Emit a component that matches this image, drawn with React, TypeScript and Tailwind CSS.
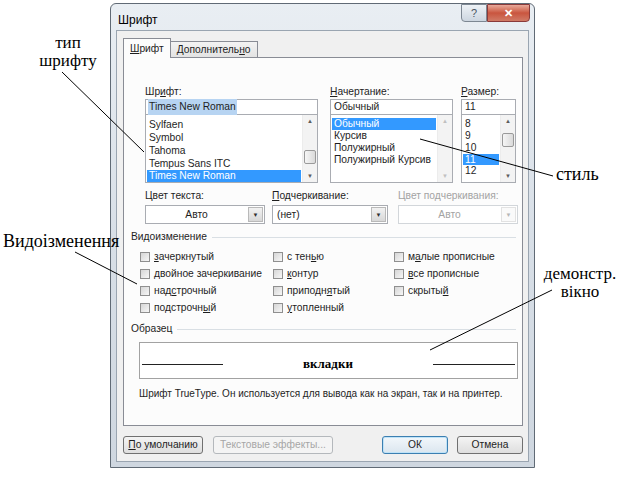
import React from "react";

const U = ({ c }: { c: string }) => <span className="underline underline-offset-[1px]">{c}</span>;

function ScrollBar({ thumb, dim }: { thumb?: string; dim?: boolean }) {
  const arrow = dim ? "text-[#c0c0c0]" : "text-[#5c5c5c]";
  return (
    <div className="relative w-[15px] h-full bg-[#f3f3f3] border-l border-[#ececec] flex flex-col items-center justify-between py-[2px]">
      <span className={`text-[6px] leading-[8px] ${arrow}`}>▲</span>
      <span className={`text-[6px] leading-[8px] ${arrow}`}>▼</span>
      {thumb && (
        <div className={`absolute left-[1px] w-[12px] rounded-[2px] border border-[#9a9a9a] bg-gradient-to-r from-[#f6f6f6] to-[#dadada] ${thumb}`} />
      )}
    </div>
  );
}

function Combo({ value, center, disabled, w }: { value: string; center?: boolean; disabled?: boolean; w: string }) {
  return (
    <div className={`${w} h-[19px] flex items-stretch bg-white border ${disabled ? "border-[#d2d6da]" : "border-[#a9acb2]"}`}>
      <div className={`flex-1 flex items-center px-[4px] ${center ? "justify-center" : ""} ${disabled ? "text-[#a3a3a3]" : ""}`}>{value}</div>
      <div className={`w-[15px] m-[1px] flex items-center justify-center border ${disabled ? "border-[#e2e2e2] bg-[#fafafa] text-[#b6b6b6]" : "border-[#b9b9b9] bg-gradient-to-b from-[#f2f2f2] to-[#d8d8d8] text-[#303030]"}`}>
        <span className="text-[6px] leading-none">▼</span>
      </div>
    </div>
  );
}

function Check({ children }: { children: React.ReactNode }) {
  return (
    <div className="h-[17px] flex items-center gap-[4px]">
      <div className="w-[10px] h-[10px] border border-[#8f8f8f] bg-gradient-to-br from-[#d6d6d6] to-[#f7f7f7]" />
      <span>{children}</span>
    </div>
  );
}

export default function App() {
  return (
    <div className="relative w-[623px] h-[477px] bg-white overflow-hidden" style={{ fontFamily: '"Liberation Sans", Arial, sans-serif' }}>
      {/* dialog */}
      <div className="ml-[110px] mt-[3px] w-[425px] h-[465px] border border-[#606a75] rounded-t-[6px] bg-gradient-to-b from-[#e9eef3] via-[#d8dfe7] to-[#cfd7e0] flex flex-col text-[10.25px] text-[#1e1e1e]">
        {/* title bar */}
        <div className="h-[26px] flex justify-between items-start pl-[7px] pr-[4px]">
          <span className="mt-[7px] text-[12px] text-black">Шрифт</span>
          <div className="flex">
            <div className="w-[26px] h-[18px] border border-[#7d8792] rounded-bl-[4px] bg-gradient-to-b from-[#eef2f6] to-[#cdd6e0] flex items-center justify-center text-[11px] text-[#4a5360]">?</div>
            <div className="w-[43px] h-[18px] border border-[#8a3a3a] rounded-br-[4px] bg-gradient-to-b from-[#e8a99a] via-[#c9553f] to-[#d07a66] flex items-center justify-center text-white font-bold text-[11px]">✕</div>
          </div>
        </div>

        {/* client */}
        <div className="flex-1 mx-[5px] mb-[5px] border border-[#9aa5b1] bg-[#f0f0f0] flex flex-col pt-[6px] pl-[6px] pr-[5px]">
          {/* tabs */}
          <div className="flex items-end h-[20px]">
            <div className="h-[20px] px-[6px] flex items-center border border-b-0 border-[#898c95] bg-[#fcfcfc] relative top-[1px] z-10">
              <span><U c="Ш" />рифт</span>
            </div>
            <div className="h-[16px] px-[6px] flex items-center border border-l-0 border-b-0 border-[#898c95] bg-gradient-to-b from-[#f3f3f3] to-[#e3e3e3]">
              <span>Дополнитель<U c="н" />о</span>
            </div>
          </div>

          {/* tab page */}
          <div className="h-[369px] border border-[#898c95] bg-[#fcfcfc] flex flex-col pl-[15px] pr-[6px]">
            {/* font/style/size */}
            <div className="flex mt-[26px] pl-[6px]">
              <div className="w-[173px] flex flex-col">
                <div className="h-[15px]">Шр<U c="и" />фт:</div>
                <div className="h-[16px] border border-[#a9acb2] bg-white flex items-center px-[2px]">
                  <span className="bg-[#b7d4f2] px-[1px]">Times New Roman</span>
                </div>
                <div className="h-[68px] border border-t-0 border-[#a9acb2] bg-white flex">
                  <div className="flex-1 flex flex-col pt-[3px] px-[1px]">
                    <div className="h-[13px] leading-[13px] px-[2px]">Sylfaen</div>
                    <div className="h-[13px] leading-[13px] px-[2px]">Symbol</div>
                    <div className="h-[13px] leading-[13px] px-[2px]">Tahoma</div>
                    <div className="h-[13px] leading-[13px] px-[2px]">Tempus Sans ITC</div>
                    <div className="h-[12px] leading-[12px] px-[2px] bg-[#3399ff] text-white">Times New Roman</div>
                  </div>
                  <ScrollBar thumb="top-[35px] h-[14px]" />
                </div>
              </div>
              <div className="w-[123px] ml-[12px] flex flex-col">
                <div className="h-[15px]"><U c="Н" />ачертание:</div>
                <div className="h-[16px] border border-[#a9acb2] bg-white flex items-center px-[3px]">Обычный</div>
                <div className="h-[68px] border border-t-0 border-[#a9acb2] bg-white flex">
                  <div className="flex-1 flex flex-col pt-[3px] px-[1px]">
                    <div className="h-[12px] leading-[12px] px-[2px] bg-[#3399ff] text-white">Обычный</div>
                    <div className="h-[12px] leading-[12px] px-[2px]">Курсив</div>
                    <div className="h-[12px] leading-[12px] px-[2px]">Полужирный</div>
                    <div className="h-[12px] leading-[12px] px-[2px]">Полужирный Курсив</div>
                  </div>
                  <ScrollBar dim />
                </div>
              </div>
              <div className="w-[55px] ml-[8px] flex flex-col">
                <div className="h-[15px]"><U c="Р" />азмер:</div>
                <div className="h-[16px] border border-[#a9acb2] bg-white flex items-center px-[3px]">11</div>
                <div className="h-[68px] border border-t-0 border-[#a9acb2] bg-white flex">
                  <div className="flex-1 flex flex-col pt-[3px] px-[1px]">
                    <div className="h-[12px] leading-[12px] px-[2px]">8</div>
                    <div className="h-[12px] leading-[12px] px-[2px]">9</div>
                    <div className="h-[12px] leading-[12px] px-[2px]">10</div>
                    <div className="h-[11px] leading-[11px] px-[2px] bg-[#3399ff] text-white">11</div>
                    <div className="h-[12px] leading-[12px] px-[2px]">12</div>
                  </div>
                  <ScrollBar thumb="top-[18px] h-[14px]" />
                </div>
              </div>
            </div>

            {/* combos */}
            <div className="flex mt-[6px] pl-[6px]">
              <div className="flex flex-col w-[120px]">
                <div className="h-[16px] leading-[14px]">Цвет текста:</div>
                <Combo value="Авто" center w="w-[120px]" />
              </div>
              <div className="flex flex-col w-[116px] ml-[7px]">
                <div className="h-[16px] leading-[14px]"><U c="П" />одчеркивание:</div>
                <Combo value="(нет)" w="w-[116px]" />
              </div>
              <div className="flex flex-col w-[120px] ml-[10px]">
                <div className="h-[16px] leading-[14px] text-[#a3a3a3]">Цвет подчеркивания:</div>
                <Combo value="Авто" center disabled w="w-[120px]" />
              </div>
            </div>

            {/* effects */}
            <div className="flex items-center gap-[5px] mt-[6px] -ml-[8px] h-[14px]">
              <span>Видоизменение</span>
              <div className="flex-1 h-px bg-[#d9dfe4]" />
            </div>
            <div className="flex mt-[4px] ml-[1px]">
              <div className="w-[133px] flex flex-col">
                <Check><U c="з" />ачеркнутый</Check>
                <Check><U c="д" />войное зачеркивание</Check>
                <Check>над<U c="с" />трочный</Check>
                <Check>подстрочн<U c="ы" />й</Check>
              </div>
              <div className="w-[121px] flex flex-col">
                <Check>с тен<U c="ь" />ю</Check>
                <Check><U c="к" />онтур</Check>
                <Check>приподн<U c="я" />тый</Check>
                <Check><U c="у" />топленный</Check>
              </div>
              <div className="flex flex-col">
                <Check>м<U c="а" />лые прописные</Check>
                <Check><U c="в" />се прописные</Check>
                <Check>скрыты<U c="й" /></Check>
              </div>
            </div>

            {/* preview */}
            <div className="flex items-center gap-[5px] mt-[6px] -ml-[8px] h-[14px]">
              <span>Образец</span>
              <div className="flex-1 h-px bg-[#d9dfe4]" />
            </div>
            <div className="mt-[6px] h-[37px] w-[379px] border border-[#a2a2a2] bg-white flex items-start justify-between px-[2px]">
              <div className="w-[81px] h-[22px] border-b border-[#222]" />
              <span className="mt-[11px] text-[13px] font-bold text-black" style={{ fontFamily: '"Liberation Serif", serif' }}>вкладки</span>
              <div className="w-[82px] h-[22px] border-b border-[#222]" />
            </div>
            <div className="mt-[7px] text-[10px] whitespace-nowrap">Шрифт TrueType. Он используется для вывода как на экран, так и на принтер.</div>
          </div>

          {/* buttons */}
          <div className="flex mt-[10px] h-[18px]">
            <div className="w-[80px] border border-[#707070] rounded-[3px] bg-gradient-to-b from-[#f4f4f4] to-[#dedede] flex items-center justify-center">
              <span><U c="П" />о умолчанию</span>
            </div>
            <div className="w-[120px] ml-[10px] border border-[#b4b8bc] rounded-[3px] bg-[#f4f4f4] flex items-center justify-center text-[#a6a6a6]">
              Текстовые эффекты...
            </div>
            <div className="w-[66px] ml-[49px] border border-[#3c7fb1] rounded-[3px] bg-gradient-to-b from-[#f2f7fb] to-[#dbe6ef] shadow-[inset_0_0_0_1px_#bfe3f8] flex items-center justify-center">
              ОК
            </div>
            <div className="w-[66px] ml-[9px] border border-[#707070] rounded-[3px] bg-gradient-to-b from-[#f4f4f4] to-[#dedede] flex items-center justify-center">
              Отмена
            </div>
          </div>
        </div>
      </div>

      {/* annotations */}
      <div className="absolute inset-0 pointer-events-none text-[17px] leading-[18px] text-black" style={{ fontFamily: '"Liberation Serif", "Times New Roman", serif' }}>
        <div className="absolute left-[33px] top-[34px] w-[70px] text-center">тип<br />шрифту</div>
        <div className="absolute left-[3px] top-[232px] text-[18px]">Видоізменення</div>
        <div className="absolute left-[556px] top-[165px] text-[18px]">стиль</div>
        <div className="absolute left-[540px] top-[265px] w-[80px] text-center">демонстр.<br />вікно</div>
        <svg className="absolute inset-0" width="623" height="477" viewBox="0 0 623 477">
          <g stroke="#000" strokeWidth="1" fill="none">
            <line x1="62" y1="72" x2="144" y2="152" />
            <line x1="75" y1="252" x2="137" y2="284" />
            <line x1="420" y1="139" x2="553" y2="176" />
            <line x1="430" y1="350" x2="552" y2="290" />
          </g>
        </svg>
      </div>
    </div>
  );
}
